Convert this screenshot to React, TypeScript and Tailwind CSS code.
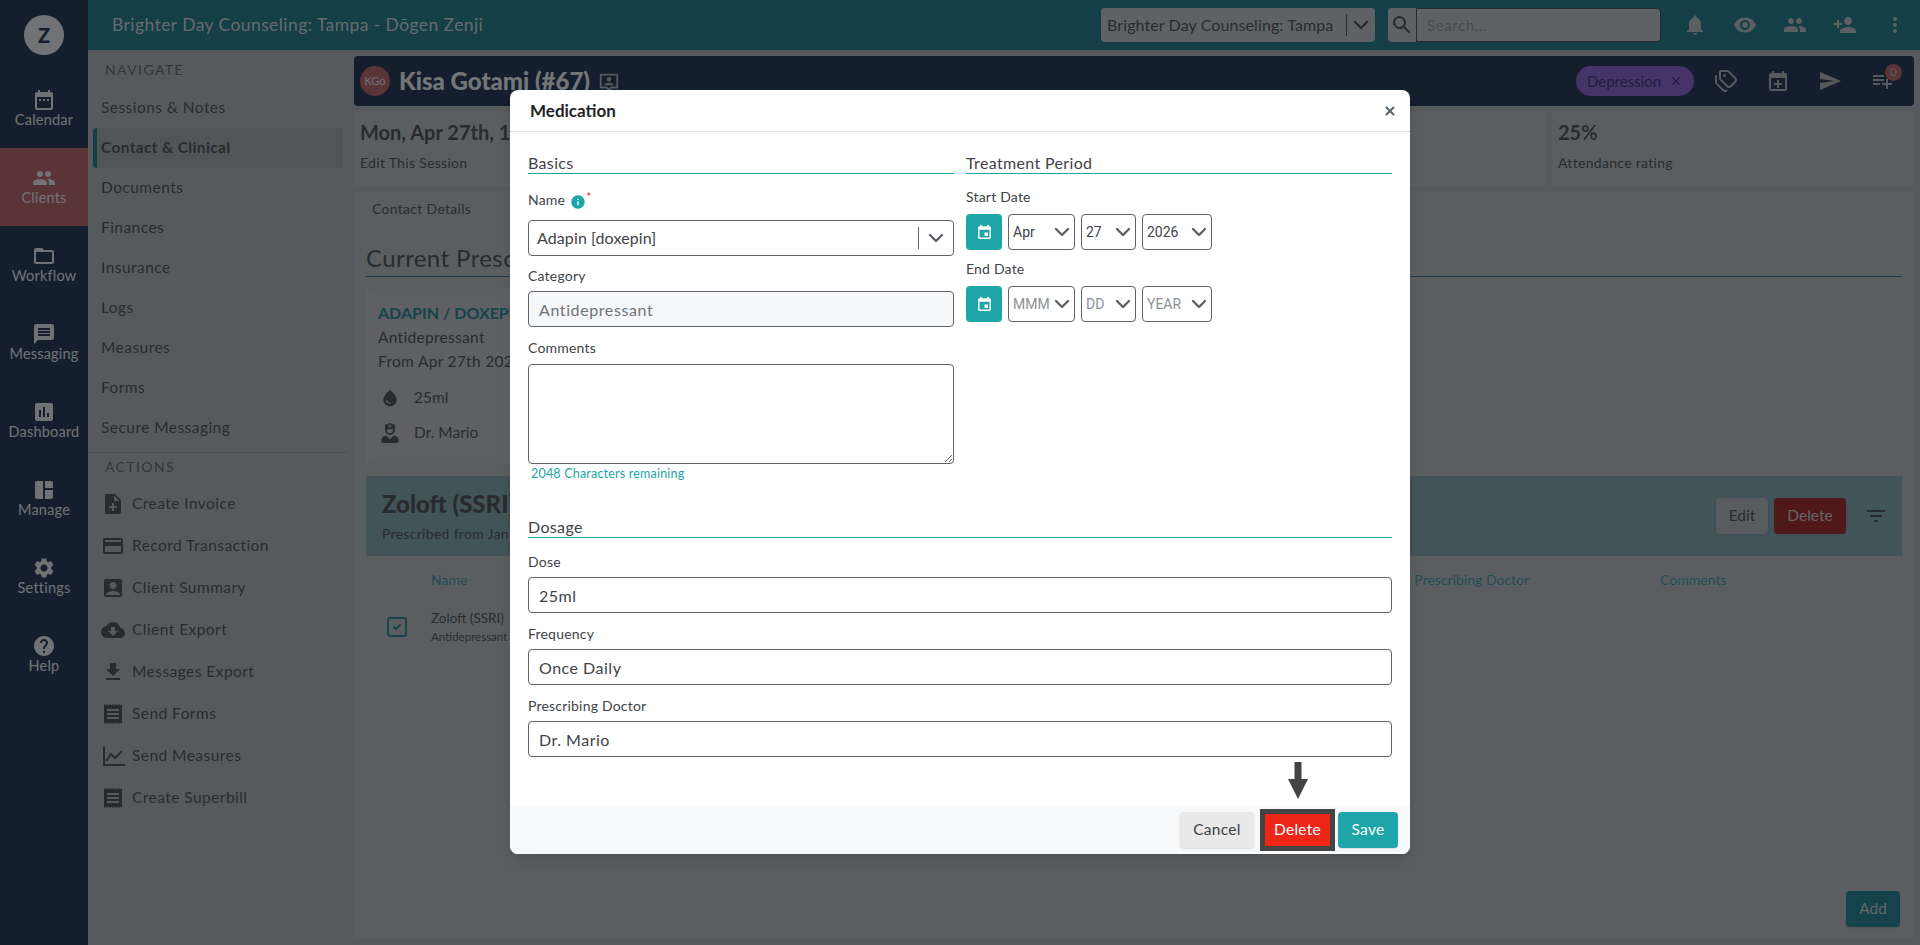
import React from "react";
import { ChevronDown, SquareCheck, Tags, X } from "lucide-react";
import {
  MdAccountBox,
  MdAssessment,
  MdClose,
  MdCloudDownload,
  MdDateRange,
  MdEvent,
  MdFileDownload,
  MdFilterList,
  MdFolderOpen,
  MdHelp,
  MdInfo,
  MdMessage,
  MdMoreVert,
  MdNoteAdd,
  MdNotifications,
  MdPayment,
  MdPeople,
  MdPersonAdd,
  MdPlaylistAdd,
  MdReceipt,
  MdSearch,
  MdSend,
  MdSettings,
  MdSpaceDashboard,
  MdVisibility,
  MdWaterDrop,
} from "react-icons/md";
import { FaUserNurse } from "react-icons/fa";

const ChartIcon = ({ className }: { className?: string }) => (
  <svg viewBox="0 0 24 24" className={className} fill="none" stroke="currentColor" strokeWidth={2}>
    <path d="M3 3v18h21" />
    <path d="M5 17l5-7 4 4 7-7" />
  </svg>
);

const CalendarPlus = ({ className }: { className?: string }) => (
  <svg viewBox="0 0 24 24" className={className} fill="currentColor">
    <path d="M19 4h-1V2h-2v2H8V2H6v2H5a2 2 0 0 0-2 2v14a2 2 0 0 0 2 2h14a2 2 0 0 0 2-2V6a2 2 0 0 0-2-2zm0 16H5V9h14v11z" />
    <path d="M11 11h2v3h3v2h-3v3h-2v-3H8v-2h3z" />
  </svg>
);

// speech bubble with a person in it, next to the client name
const PresenterIcon = ({ className }: { className?: string }) => (
  <svg viewBox="0 0 24 24" className={className} fill="currentColor">
    <path d="M3 3h18a1 1 0 0 1 1 1v14a1 1 0 0 1-1 1h-6l-3 3-3-3H3a1 1 0 0 1-1-1V4a1 1 0 0 1 1-1zm1 2v12h6l2 2 2-2h6V5z" />
    <circle cx="12" cy="9" r="2.4" />
    <path d="M7 15.5c0-1.8 3-2.7 5-2.7s5 .9 5 2.7z" />
  </svg>
);

const sideItems = [
  { label: "Calendar", icon: MdDateRange },
  { label: "Clients", icon: MdPeople, active: true },
  { label: "Workflow", icon: MdFolderOpen },
  { label: "Messaging", icon: MdMessage },
  { label: "Dashboard", icon: MdAssessment },
  { label: "Manage", icon: MdSpaceDashboard },
  { label: "Settings", icon: MdSettings },
  { label: "Help", icon: MdHelp },
];

const navItems = [
  "Sessions & Notes",
  "Contact & Clinical",
  "Documents",
  "Finances",
  "Insurance",
  "Logs",
  "Measures",
  "Forms",
  "Secure Messaging",
];

const actionItems = [
  { label: "Create Invoice", icon: MdNoteAdd },
  { label: "Record Transaction", icon: MdPayment },
  { label: "Client Summary", icon: MdAccountBox },
  { label: "Client Export", icon: MdCloudDownload },
  { label: "Messages Export", icon: MdFileDownload },
  { label: "Send Forms", icon: MdReceipt },
  { label: "Send Measures", icon: ChartIcon },
  { label: "Create Superbill", icon: MdReceipt },
];

const Sidebar = () => (
  <aside className="w-[88px] shrink-0 bg-[#001632] text-[#e6e6e6]">
    <div className="flex h-[70px] items-center justify-center">
      <div className="flex h-10 w-10 items-center justify-center rounded-full bg-[#e6e6e6] text-[20px] font-black text-[#001632]">
        Z
      </div>
    </div>
    {sideItems.map((item) => (
      <div
        key={item.label}
        className={`flex h-[78px] flex-col items-center pt-[18px] ${item.active ? "bg-[#b24b4e]" : ""}`}
      >
        <item.icon className="h-6 w-6" />
        <span className="-mt-px text-[14.5px] leading-[18px] tracking-[0.2px]">{item.label}</span>
      </div>
    ))}
  </aside>
);

const TopBar = () => (
  <header className="flex h-[50px] shrink-0 items-center bg-[#006673] pl-6 pr-[13px] text-[#cfd2d2]">
    <div className="flex-1 text-[17.5px] tracking-[0.42px]">Brighter Day Counseling: Tampa - Dōgen Zenji</div>
    <div className="mr-[13px] flex h-[34px] w-[274px] items-center rounded-sm bg-[#bbbebb] pl-[6px] text-[16px] tracking-[0.1px] text-[#323437]">
      <span className="flex-1 whitespace-nowrap">Brighter Day Counseling: Tampa</span>
      <span className="h-[22px] w-px bg-[#323437]" />
      <ChevronDown className="mx-[2px] h-6 w-6 shrink-0" strokeWidth={2.4} />
    </div>
    <div className="flex h-[34px] w-7 items-center justify-center rounded-l-sm bg-[#bbbebb] text-[#323437]">
      <MdSearch className="h-6 w-6" />
    </div>
    <div className="mr-[22px] flex h-[34px] w-[245px] items-center rounded-r-sm border border-[#323437] bg-[#bbbebb] pl-[10px] text-[15px] tracking-[0.6px] text-[#7e8285]">
      Search...
    </div>
    <div className="flex gap-[26px] text-[#b4b7b7]">
      <MdNotifications className="h-6 w-6" />
      <MdVisibility className="h-6 w-6" />
      <MdPeople className="h-6 w-6" />
      <MdPersonAdd className="h-6 w-6" />
      <MdMoreVert className="h-6 w-6" />
    </div>
  </header>
);

const NavColumn = () => (
  <nav className="w-[266px] shrink-0 pt-[10px] text-[#323437]">
    <div className="pl-[17px] text-[14px] leading-5 tracking-[1.4px] text-[#4a4e52]">NAVIGATE</div>
    <div className="mt-[8px] pl-[5px] pr-[11px]">
      {navItems.map((label, i) =>
        i === 1 ? (
          <div
            key={label}
            className="flex h-10 items-center rounded-l-sm border-l-4 border-[#006673] bg-[#9a9fa3] pl-[4px] text-[15.5px] font-bold tracking-[0.35px]"
          >
            {label}
          </div>
        ) : (
          <div key={label} className="flex h-10 items-center pl-[8px] text-[15.5px] tracking-[0.45px]">
            {label}
          </div>
        ),
      )}
    </div>
    <div className="mt-[4px] mr-[6px] border-t border-[#8f9496] pt-[4px] pl-[17px] text-[14px] leading-5 tracking-[1.4px] text-[#4a4e52]">
      ACTIONS
    </div>
    <div className="mt-[6px]">
      {actionItems.map((item) => (
        <div key={item.label} className="flex h-[42px] items-center pl-[13px]">
          <span className="flex w-[31px] justify-start">
            <item.icon className="h-6 w-6" />
          </span>
          <span className="text-[15.5px] tracking-[0.45px]">{item.label}</span>
        </div>
      ))}
    </div>
  </nav>
);

const PatientHeader = () => (
  <div className="flex h-[50px] items-center rounded bg-[#001632] pl-[6px] pr-[12px] text-[#a8aaa8]">
    <div className="flex h-[30px] w-[30px] items-center justify-center rounded-full bg-[#b24b4e] text-[11px] text-[#e6e6e6]">KGo</div>
    <div className="ml-[9px] text-[24px] font-black text-[#edf0ed]">Kisa Gotami (#67)</div>
    <PresenterIcon className="ml-[8px] mt-[2px] h-[22px] w-[22px]" />
    <div className="flex-1" />
    <div className="flex h-[30px] w-[118px] items-center justify-center gap-2 rounded-full bg-[#7d4bc8] text-[15px] text-[#191457]">
      Depression
      <MdClose className="h-3.5 w-3.5" />
    </div>
    <Tags className="ml-[20px] h-6 w-6" />
    <CalendarPlus className="ml-[28px] h-6 w-6" />
    <MdSend className="ml-[28px] h-6 w-6" />
    <MdPlaylistAdd className="relative ml-[28px] h-6 w-6" />
    <span className="-ml-[9px] -mt-[18px] flex h-[17px] w-[17px] items-center justify-center rounded-full bg-[#b24b4e] text-[12px]">0</span>
  </div>
);

const StatCard = ({ title, sub, className }: { title: string; sub: string; className: string }) => (
  <div className={`rounded bg-[#b2b4b4] pl-[6px] pt-[6px] text-[#323437] ${className}`}>
    <div className="h-7 whitespace-nowrap text-[20px] font-bold leading-7">{title}</div>
    <div className="mt-[7px] text-[14px] leading-5 tracking-[0.3px]">{sub}</div>
  </div>
);

const ContentPanel = () => (
  <div className="relative mt-[6px] flex-1 rounded bg-[#b2b4b4] px-3 text-[#323437]">
    <div className="flex gap-[43px] pl-[6px] pt-[7px] text-[14px] leading-5 tracking-[0.3px]">
      <span>Contact Details</span>
      <span>Clinical</span>
    </div>
    <h2 className="mt-[23px] whitespace-nowrap border-b border-[#006673] pb-[2px] text-[24px] leading-[32px] tracking-[0.4px]">
      Current Prescriptions
    </h2>
    <div className="mt-[12px] h-[174px] w-[320px] rounded bg-[#b8baba] px-3 pt-[12px]">
      <div className="whitespace-nowrap text-[16px] font-bold leading-6 text-[#00707d]">ADAPIN / DOXEPIN</div>
      <div className="text-[15.5px] leading-[24px] tracking-[0.3px]">Antidepressant</div>
      <div className="text-[15.5px] leading-[24px] tracking-[0.3px]">From Apr 27th 2026</div>
      <div className="mt-[13px] flex items-center gap-[14px] pl-[2px] text-[15.5px]">
        <MdWaterDrop className="h-5 w-5" />
        25ml
      </div>
      <div className="mt-[12px] flex items-center gap-[14px] pl-[2px] text-[15.5px]">
        <FaUserNurse className="h-5 w-5" />
        Dr. Mario
      </div>
    </div>
    <div className="mt-[13px] flex h-[80px] items-center bg-[#739b9d] pl-4 pr-[14px]">
      <div className="flex-1">
        <div className="whitespace-nowrap text-[24px] font-black leading-8">Zoloft (SSRI)</div>
        <div className="mt-[4px] whitespace-nowrap text-[14px] leading-5 tracking-[0.3px]">Prescribed from Jan 1st 2026</div>
      </div>
      <button className="h-9 w-[52px] rounded bg-[#acafb0] text-[15.5px] shadow">Edit</button>
      <button className="ml-[6px] mr-[2px] h-9 w-[72px] rounded bg-[#960800] text-[15.5px] text-[#c8c0c0] shadow">Delete</button>
      <MdFilterList className="ml-[16px] h-6 w-6" />
    </div>
    <div className="flex h-[46px] items-center text-[14px] text-[#258496]">
      <span className="ml-[65px]">Name</span>
      <span className="ml-[947px]">Prescribing Doctor</span>
      <span className="ml-[131px]">Comments</span>
    </div>
    <div className="mt-[7px] flex items-center">
      <SquareCheck className="ml-[19px] h-6 w-6 text-[#00707d]" strokeWidth={1.8} />
      <div className="ml-[22px]">
        <div className="whitespace-nowrap text-[13.5px] leading-[19px]">Zoloft (SSRI)</div>
        <div className="whitespace-nowrap text-[11.5px] leading-[17px]">Antidepressant</div>
      </div>
    </div>
    <button className="absolute bottom-[11px] right-[14px] h-9 w-[54px] rounded bg-[#00707d] text-[15.5px] text-[#c8cccc] shadow">
      Add
    </button>
  </div>
);

const Label = ({ children }: { children: React.ReactNode }) => (
  <div className="text-[14px] leading-5 tracking-[0.2px] text-[#3f4347]">{children}</div>
);

const SectionTitle = ({ children }: { children: React.ReactNode }) => (
  <div className="border-b border-[#1da5a8] text-[16px] leading-5 tracking-[0.35px] text-[#3f4347]">{children}</div>
);

const TextField = ({ value, disabled }: { value: string; disabled?: boolean }) => (
  <input
    readOnly
    value={value}
    className={`mt-[5px] block h-9 w-full rounded border border-[#5f6368] pl-[10px] pr-2 text-[16px] outline-none ${disabled ? "bg-[#f6f7f9] tracking-[0.6px] text-[#6f7377]" : "bg-white tracking-[0.5px] text-[#3f4347]"}`}
  />
);

const DateSelect = ({ value, width, muted }: { value: string; width: string; muted?: boolean }) => (
  <div className={`flex h-9 items-center justify-between rounded border border-[#5f6368] pl-1 ${width}`}>
    <span className={`text-[14px] ${muted ? "text-[#8d9196]" : "text-[#3f4347]"}`} style={{ fontFamily: "Roboto, sans-serif" }}>
      {value}
    </span>
    <ChevronDown className="h-6 w-6 shrink-0 text-[#5f6368]" strokeWidth={2.4} />
  </div>
);

const DateRow = ({ values, muted }: { values: string[]; muted?: boolean }) => (
  <div className="mt-[7px] flex gap-[6px]">
    <button className="flex h-9 w-9 items-center justify-center rounded bg-[#1da5a8] text-white">
      <MdEvent className="h-[17px] w-[17px]" />
    </button>
    <DateSelect value={values[0]} width="w-[67px]" muted={muted} />
    <DateSelect value={values[1]} width="w-[55px]" muted={muted} />
    <DateSelect value={values[2]} width="w-[70px]" muted={muted} />
  </div>
);

const MedicationModal = () => (
  <div className="absolute left-[510px] top-[90px] flex h-[764px] w-[900px] flex-col overflow-hidden rounded-lg bg-white text-[#3f4347] shadow-lg">
    <div className="flex h-[42px] shrink-0 items-center justify-between border-b border-[#dcdde0] pl-5 pr-[13px]">
      <span className="text-[17px] font-bold text-[#1f2328]">Medication</span>
      <X className="h-[14px] w-[14px] text-[#5c6670]" strokeWidth={3.5} />
    </div>
    <div className="flex-1 px-[18px] pt-[21px]">
      <div className="grid grid-cols-2 gap-x-3">
        <div>
          <SectionTitle>Basics</SectionTitle>
          <div className="mt-[16px] flex items-start">
            <Label>Name</Label>
            <MdInfo className="ml-[5px] mt-[4px] h-4 w-4 text-[#1da5a8]" />
            <span className="mt-[-1px] text-[12px] leading-4 text-[#e8262a]">*</span>
          </div>
          <div className="mt-[10px] flex h-9 items-center rounded border border-[#5f6368] pl-2 text-[16px] tracking-[0.1px]">
            <span className="flex-1">Adapin [doxepin]</span>
            <span className="h-[22px] w-px bg-[#5f6368]" />
            <ChevronDown className="mx-[5px] h-6 w-6 shrink-0 text-[#5f6368]" strokeWidth={2.4} />
          </div>
          <div className="mt-[10px]">
            <Label>Category</Label>
          </div>
          <TextField value="Antidepressant" disabled />
          <div className="mt-[11px]">
            <Label>Comments</Label>
          </div>
          <textarea readOnly className="mt-[6px] block h-[100px] w-full rounded border border-[#5f6368] outline-none" />
          <div className="pl-[3px] pt-[1px] text-[12.5px] leading-[18px] tracking-[0.2px] text-[#1da5a8]">2048 Characters remaining</div>
        </div>
        <div>
          <SectionTitle>Treatment Period</SectionTitle>
          <div className="mt-[13px]">
            <Label>Start Date</Label>
          </div>
          <DateRow values={["Apr", "27", "2026"]} />
          <div className="mt-[9px]">
            <Label>End Date</Label>
          </div>
          <DateRow values={["MMM", "DD", "YEAR"]} muted />
        </div>
      </div>
      <div className="mt-[34px]">
        <SectionTitle>Dosage</SectionTitle>
      </div>
      <div className="mt-[14px]">
        <Label>Dose</Label>
      </div>
      <TextField value="25ml" />
      <div className="mt-[11px]">
        <Label>Frequency</Label>
      </div>
      <TextField value="Once Daily" />
      <div className="mt-[11px]">
        <Label>Prescribing Doctor</Label>
      </div>
      <TextField value="Dr. Mario" />
    </div>
    <div className="flex h-12 shrink-0 items-center justify-end bg-[#f8f9fb] pr-3">
      <button className="h-9 w-[74px] rounded bg-[#e9e9e9] text-[15.5px] tracking-[0.3px] shadow-sm">Cancel</button>
      <button className="ml-[6px] h-[42px] w-[75px] border-[5px] border-[#444444] bg-[#ee2617] text-[15.5px] tracking-[0.3px] text-white">
        Delete
      </button>
      <button className="ml-[3px] h-9 w-[60px] rounded bg-[#1da5a8] text-[15.5px] tracking-[0.3px] text-white shadow-sm">Save</button>
    </div>
    {/* annotation arrow pointing at the delete button */}
    <svg viewBox="0 0 22 38" className="absolute bottom-[54px] left-[777px] h-[38px] w-[22px]" fill="#444444">
      <path d="M7.5 0h7v17H21L11 37 1 17h6.5z" />
    </svg>
  </div>
);

export default function App() {
  return (
    <div
      className="relative flex h-[945px] w-[1920px] overflow-hidden bg-[#a5aaac]"
      style={{ fontFamily: "Lato, 'Open Sans', sans-serif" }}
    >
      <Sidebar />
      <div className="flex min-w-0 flex-1 flex-col">
        <TopBar />
        <div className="flex min-h-0 flex-1">
          <NavColumn />
          <main className="flex min-w-0 flex-1 flex-col pb-[7px] pr-[6px] pt-[6px]">
            <PatientHeader />
            <div className="mt-[6px] flex h-[74px] gap-[6px]">
              <StatCard title="Mon, Apr 27th, 10:00am" sub="Edit This Session" className="flex-1" />
              <StatCard title="" sub="" className="flex-1" />
              <StatCard title="25%" sub="Attendance rating" className="w-[362px]" />
            </div>
            <ContentPanel />
          </main>
        </div>
      </div>
      <div className="absolute inset-0 bg-[#212529]/60" />
      <MedicationModal />
    </div>
  );
}
